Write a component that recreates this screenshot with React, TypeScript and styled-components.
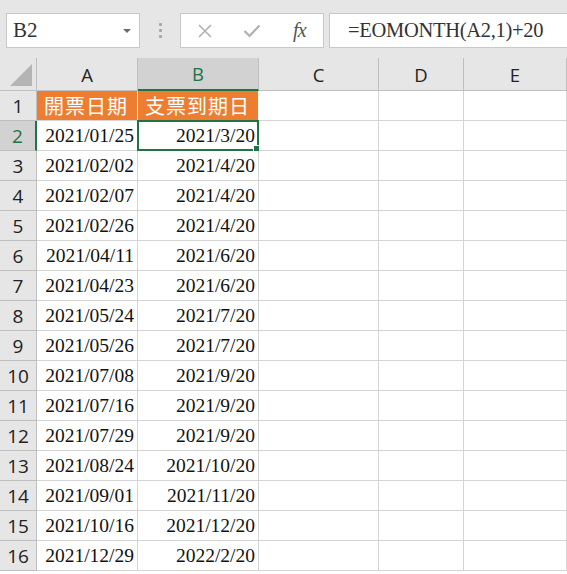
import React from "react"
import styled, { createGlobalStyle } from "styled-components"

const GlobalStyle = createGlobalStyle`
  html, body {
    margin: 0;
    padding: 0;
    background: #ffffff;
  }
`

const GREEN = "#217346"
const GRID = "#d4d4d4"
const HEAD_LINE = "#bfbfbf"

const COLUMNS = ["A", "B", "C", "D", "E"]
const COL_WIDTHS = "37px 101px 121px 120px 85px 103px"

const rows: [string, string][] = [
  ["2021/01/25", "2021/3/20"],
  ["2021/02/02", "2021/4/20"],
  ["2021/02/07", "2021/4/20"],
  ["2021/02/26", "2021/4/20"],
  ["2021/04/11", "2021/6/20"],
  ["2021/04/23", "2021/6/20"],
  ["2021/05/24", "2021/7/20"],
  ["2021/05/26", "2021/7/20"],
  ["2021/07/08", "2021/9/20"],
  ["2021/07/16", "2021/9/20"],
  ["2021/07/29", "2021/9/20"],
  ["2021/08/24", "2021/10/20"],
  ["2021/09/01", "2021/11/20"],
  ["2021/10/16", "2021/12/20"],
  ["2021/12/29", "2022/2/20"],
]

const Page = styled.div`
  width: 567px;
  height: 574px;
  overflow: hidden;
  background: #ffffff;
`

const FormulaBar = styled.div`
  height: 58px;
  background: #e6e6e6;
  display: flex;
  align-items: flex-start;
  padding: 13px 0 0 6px;
  box-sizing: border-box;
`

const NameBox = styled.div`
  width: 134px;
  height: 35px;
  box-sizing: border-box;
  background: #ffffff;
  border: 1px solid #c8c8c8;
  display: flex;
  align-items: center;
  justify-content: space-between;
  padding: 0 8px 0 6px;
`

const NameText = styled.span`
  font-family: "Liberation Serif", "Times New Roman", serif;
  font-size: 21px;
  color: #333333;
`

const DropArrow = styled.span`
  width: 0;
  height: 0;
  border-left: 4px solid transparent;
  border-right: 4px solid transparent;
  border-top: 4px solid #6b6b6b;
`

const Grip = styled.div`
  width: 40px;
  height: 35px;
  display: flex;
  flex-direction: column;
  align-items: center;
  justify-content: center;
  gap: 3px;
`

const Dot = styled.span`
  width: 3px;
  height: 3px;
  border-radius: 1px;
  background: #a6a6a6;
`

const ButtonBox = styled.div`
  width: 144px;
  height: 35px;
  box-sizing: border-box;
  background: #ffffff;
  border: 1px solid #c8c8c8;
  display: flex;
  align-items: center;
`

const BarButton = styled.div`
  flex: 1;
  height: 100%;
  display: flex;
  align-items: center;
  justify-content: center;
`

const Fx = styled.span`
  font-family: "Liberation Serif", serif;
  font-style: italic;
  font-size: 20px;
  color: #555555;
  letter-spacing: -1px;
`

const FormulaInput = styled.div`
  flex: 1;
  margin-left: 5px;
  height: 35px;
  box-sizing: border-box;
  background: #ffffff;
  border: 1px solid #c8c8c8;
  border-right: none;
  display: flex;
  align-items: center;
  padding-left: 18px;
  font-family: "Liberation Serif", serif;
  font-size: 20.5px;
  color: #333333;
  letter-spacing: -0.3px;
`

const Sheet = styled.div`
  display: grid;
  grid-template-columns: ${COL_WIDTHS};
  grid-template-rows: 33px;
  grid-auto-rows: 30px;
`

const Corner = styled.div`
  box-sizing: border-box;
  background: #e6e6e6;
  border-right: 1px solid ${HEAD_LINE};
  border-bottom: 1px solid ${HEAD_LINE};
  position: relative;
`

const CornerTriangle = styled.span`
  position: absolute;
  right: 4px;
  bottom: 4px;
  width: 0;
  height: 0;
  border-left: 22px solid transparent;
  border-bottom: 22px solid #b4b4b4;
`

const ColHead = styled.div<{ $active?: boolean }>`
  box-sizing: border-box;
  background: ${(p) => (p.$active ? "#d2d2d2" : "#e6e6e6")};
  border-right: 1px solid ${HEAD_LINE};
  border-bottom: ${(p) => (p.$active ? `2px solid ${GREEN}` : `1px solid ${HEAD_LINE}`)};
  display: flex;
  align-items: center;
  justify-content: center;
  font-family: "Open Sans", "Liberation Sans", sans-serif;
  font-size: 18.5px;
  color: ${(p) => (p.$active ? GREEN : "#222222")};
`

const RowHead = styled.div<{ $active?: boolean }>`
  box-sizing: border-box;
  background: ${(p) => (p.$active ? "#d2d2d2" : "#e6e6e6")};
  border-right: ${(p) => (p.$active ? `2px solid ${GREEN}` : `1px solid ${HEAD_LINE}`)};
  border-bottom: 1px solid ${HEAD_LINE};
  display: flex;
  align-items: center;
  justify-content: center;
  font-family: "Open Sans", "Liberation Sans", sans-serif;
  font-size: 19px;
  color: ${(p) => (p.$active ? GREEN : "#222222")};
`

const Cell = styled.div<{ $title?: boolean }>`
  position: relative;
  box-sizing: border-box;
  border-right: 1px solid ${(p) => (p.$title ? "#ffffff" : GRID)};
  border-bottom: 1px solid ${GRID};
  background: ${(p) => (p.$title ? "#ed7d31" : "#ffffff")};
  color: ${(p) => (p.$title ? "#ffffff" : "#111111")};
  display: flex;
  align-items: center;
  justify-content: ${(p) => (p.$title ? "flex-start" : "flex-end")};
  padding: ${(p) => (p.$title ? "0 0 0 7px" : "0 3px 0 0")};
  font-family: ${(p) =>
    p.$title
      ? `"Noto Sans CJK TC", "Noto Sans CJK SC", sans-serif`
      : `"Liberation Serif", serif`};
  font-size: ${(p) => (p.$title ? "20px" : "19.5px")};
  letter-spacing: ${(p) => (p.$title ? "1px" : "0")};
  white-space: nowrap;
`

const Selection = styled.span`
  position: absolute;
  left: -1px;
  top: -1px;
  right: -1px;
  bottom: -1px;
  border: 2px solid ${GREEN};
  pointer-events: none;
`

const FillHandle = styled.span`
  position: absolute;
  right: -4px;
  bottom: -4px;
  width: 6px;
  height: 6px;
  background: ${GREEN};
  border: 1px solid #ffffff;
`

const CrossIcon = () => (
  <svg width="16" height="16" viewBox="0 0 16 16">
    <path d="M2 2 L14 14 M14 2 L2 14" stroke="#b0b0b0" strokeWidth="1.6" fill="none" />
  </svg>
)

const CheckIcon = () => (
  <svg width="18" height="16" viewBox="0 0 18 16">
    <path d="M1.5 8 L6.5 13 L16.5 2.5" stroke="#b0b0b0" strokeWidth="2.2" fill="none" />
  </svg>
)

function App() {
  return (
    <Page>
      <GlobalStyle />
      <FormulaBar>
        <NameBox>
          <NameText>B2</NameText>
          <DropArrow />
        </NameBox>
        <Grip>
          <Dot />
          <Dot />
          <Dot />
        </Grip>
        <ButtonBox>
          <BarButton>
            <CrossIcon />
          </BarButton>
          <BarButton>
            <CheckIcon />
          </BarButton>
          <BarButton>
            <Fx>fx</Fx>
          </BarButton>
        </ButtonBox>
        <FormulaInput>=EOMONTH(A2,1)+20</FormulaInput>
      </FormulaBar>

      <Sheet>
        <Corner>
          <CornerTriangle />
        </Corner>
        {COLUMNS.map((c) => (
          <ColHead key={c} $active={c === "B"}>
            {c}
          </ColHead>
        ))}

        <RowHead>1</RowHead>
        <Cell $title>開票日期</Cell>
        <Cell $title>支票到期日</Cell>
        <Cell />
        <Cell />
        <Cell />

        {rows.map(([a, b], i) => {
          const n = i + 2
          const selected = n === 2
          return (
            <React.Fragment key={n}>
              <RowHead $active={selected}>{n}</RowHead>
              <Cell>{a}</Cell>
              <Cell>
                {b}
                {selected && (
                  <Selection>
                    <FillHandle />
                  </Selection>
                )}
              </Cell>
              <Cell />
              <Cell />
              <Cell />
            </React.Fragment>
          )
        })}
      </Sheet>
    </Page>
  )
}

export default App
